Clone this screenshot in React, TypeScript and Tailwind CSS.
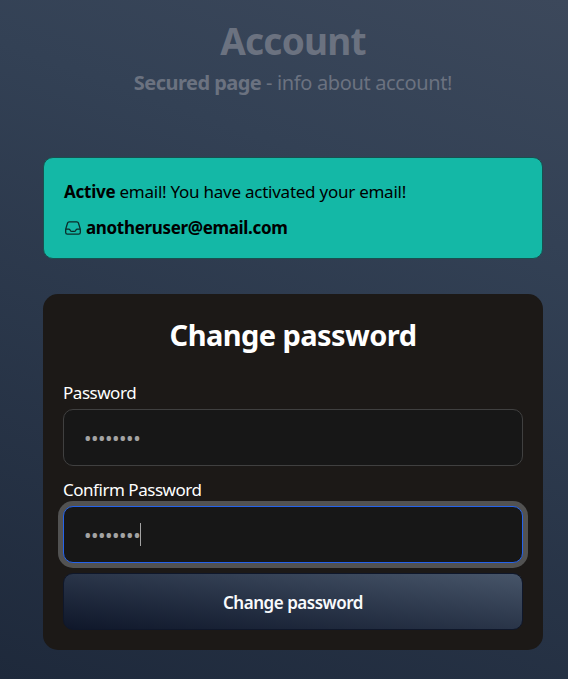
const BULLETS = "••••••••";

function InboxIcon() {
  return (
    <svg className="h-[18px] w-[18px] shrink-0" viewBox="0 0 24 24" fill="none" stroke="#0b2b28" strokeWidth="1.7" strokeLinecap="round" strokeLinejoin="round">
      <path d="M2.25 13.5h3.86a2.25 2.25 0 0 1 2.012 1.244l.256.512a2.25 2.25 0 0 0 2.013 1.244h3.218a2.25 2.25 0 0 0 2.013-1.244l.256-.512a2.25 2.25 0 0 1 2.013-1.244h3.859m-19.5.338V18a2.25 2.25 0 0 0 2.25 2.25h15A2.25 2.25 0 0 0 21.75 18v-4.162c0-.224-.034-.447-.1-.661L19.24 5.338a2.25 2.25 0 0 0-2.15-1.588H6.911a2.25 2.25 0 0 0-2.15 1.588L2.35 13.177a2.25 2.25 0 0 0-.1.661Z" />
    </svg>
  );
}

function PasswordField({ label, focused = false }: { label: string; focused?: boolean }) {
  return (
    <div className="flex flex-col">
      <label className="h-[29px] text-[17px] leading-[26px] tracking-[-0.47px] whitespace-nowrap text-white">{label}</label>
      <div
        className={`flex h-[57px] items-center rounded-[10px] border bg-[#171717] pl-5 text-[#a3a3a3] ${
          focused ? "border-[#2563eb] ring-[5px] ring-[#525252]" : "border-[#404040]"
        }`}
      >
        <span className="pt-[2px] text-[20px] leading-none tracking-[-0.5px]">{BULLETS}</span>
        {focused && <span className="h-[23px] w-px bg-[#a3a3a3]" />}
      </div>
    </div>
  );
}

export default function App() {
  return (
    <div className="h-[684px] w-[568px] overflow-hidden bg-white font-['Noto_Sans',sans-serif]">
      <main className="flex h-[679px] flex-col bg-[linear-gradient(20deg,#1e293b,#334155_72%,#3c485b)] pr-[25px] pl-[43px]">
        <header className="flex h-[157px] flex-col items-center pt-[21px] text-[#6b7280]">
          <h1 className="text-[37px] leading-10 font-bold tracking-[-0.8px]">Account</h1>
          <p className="mt-2 text-[20px] leading-7 tracking-[-0.36px] whitespace-nowrap">
            <b className="tracking-[-0.53px]">Secured page</b> - info about account!
          </p>
        </header>

        <section className="flex h-[102px] flex-col rounded-[10px] border border-[#17514f] bg-[#14b8a6] pt-[20px] pl-[20px] text-[17px] leading-[28px] text-black">
          <p className="tracking-[-0.25px] whitespace-nowrap">
            <b>Active</b> email! You have activated your email!
          </p>
          <p className="mt-[8px] flex items-center gap-1 font-bold tracking-[-0.33px]">
            <InboxIcon />
            <span>anotheruser@email.com</span>
          </p>
        </section>

        <section className="mt-[35px] flex h-[356px] flex-col rounded-[15px] bg-[#1c1917] px-5">
          <h2 className="pt-[23px] text-center text-[29px] leading-9 font-bold tracking-[-0.57px] text-white">Change password</h2>
          <form className="mt-[27px] flex flex-col gap-[11px]">
            <PasswordField label="Password" />
            <PasswordField label="Confirm Password" focused />
            <button type="button" className="-mt-px h-[57px] rounded-[10px] border border-[#0f172a] bg-linear-to-tr from-[#0f172a] to-[#475569] pt-[2px] text-[17px] font-semibold tracking-[-0.47px] text-[#f8fafc]">
              Change password
            </button>
          </form>
        </section>
      </main>
    </div>
  );
}
